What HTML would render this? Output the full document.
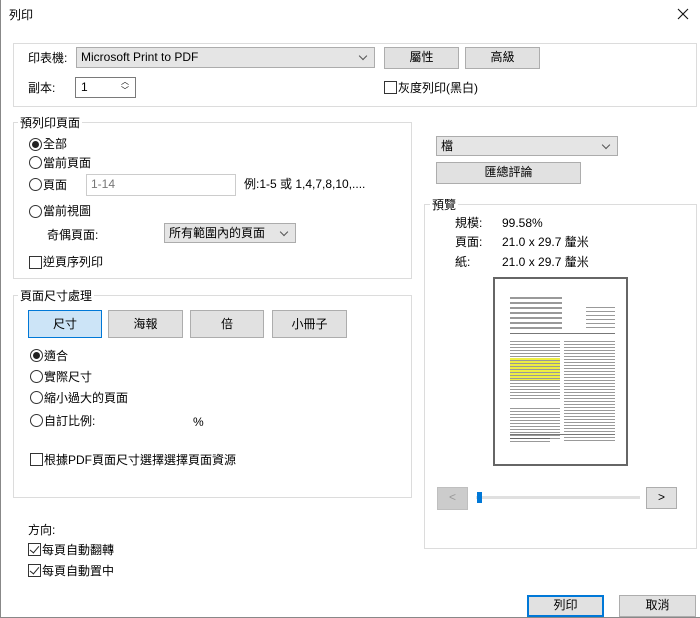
<!DOCTYPE html>
<html><head><meta charset="utf-8"><style>
*{box-sizing:border-box;margin:0;padding:0}
body{width:700px;height:618px;background:#fff;font-family:"Liberation Sans","Noto Sans CJK TC",sans-serif;font-size:12px;color:#000;position:relative;overflow:hidden}
.a{position:absolute;white-space:nowrap;line-height:14px}
.grp{position:absolute;border:1px solid #dcdcdc}
.leg{position:absolute;background:#fff;padding:0 2px;line-height:14px}
.btn{position:absolute;background:#e1e1e1;border:1px solid #adadad;text-align:center;line-height:19px}
.sel{position:absolute;background:#e5e5e5;border:1px solid #acacac;padding-left:4px;line-height:18px}
.sel:after{content:"";position:absolute;right:8px;top:5px;width:5px;height:5px;border-right:1px solid #555;border-bottom:1px solid #555;transform:rotate(45deg)}
.rad{position:absolute;width:13px;height:13px;border:1px solid #333;border-radius:50%;background:#fff}
.rad.on:after{content:"";position:absolute;left:2px;top:2px;width:7px;height:7px;border-radius:50%;background:#222}
.chk{position:absolute;width:13px;height:13px;border:1px solid #333;background:#fff}
.chk.on:after{content:"";position:absolute;left:3px;top:0px;width:4px;height:8px;border-right:1px solid #222;border-bottom:1px solid #222;transform:rotate(40deg)}
.line{position:absolute;height:1px;background:#333}
.tx{position:absolute;opacity:.5}
</style></head><body>
<div style="position:absolute;left:0;top:0;width:700px;height:618px;border:1px solid #888;border-top:none;border-right:none"></div>
<div class="a" style="left:9px;top:8px">列印</div>
<svg style="position:absolute;left:677px;top:8px" width="12" height="12"><path d="M1 1L11 11M11 1L1 11" stroke="#111" stroke-width="1.1"/></svg>

<div class="grp" style="left:13px;top:43px;width:684px;height:64px"></div>
<div class="a" style="left:28px;top:51px">印表機:</div>
<div class="sel" style="left:76px;top:47px;width:299px;height:21px">Microsoft Print to PDF</div>
<div class="btn" style="left:384px;top:47px;width:75px;height:22px">屬性</div>
<div class="btn" style="left:465px;top:47px;width:75px;height:22px">高級</div>
<div class="a" style="left:28px;top:81px">副本:</div>
<div style="position:absolute;left:75px;top:77px;width:61px;height:21px;border:1px solid #7a7a7a;background:#fff;padding-left:5px;line-height:18px">1</div>
<div class="a" style="left:121px;top:77px;font-size:8px;line-height:9px">︿<br>﹀</div>
<div class="chk" style="left:384px;top:81px"></div>
<div class="a" style="left:398px;top:81px">灰度列印(黑白)</div>

<div class="grp" style="left:13px;top:122px;width:399px;height:157px"></div>
<div class="leg" style="left:18px;top:116px">預列印頁面</div>
<div class="rad on" style="left:29px;top:138px"></div><div class="a" style="left:43px;top:137px">全部</div>
<div class="rad" style="left:29px;top:156px"></div><div class="a" style="left:43px;top:156px">當前頁面</div>
<div class="rad" style="left:29px;top:178px"></div><div class="a" style="left:43px;top:178px">頁面</div>
<div style="position:absolute;left:86px;top:174px;width:150px;height:22px;border:1px solid #ccc;color:#777;padding-left:4px;line-height:19px">1-14</div>
<div class="a" style="left:244px;top:177px">例:1-5 或 1,4,7,8,10,....</div>
<div class="rad" style="left:29px;top:205px"></div><div class="a" style="left:43px;top:204px">當前視圖</div>
<div class="a" style="left:47px;top:228px">奇偶頁面:</div>
<div class="sel" style="left:164px;top:223px;width:132px;height:20px">所有範圍內的頁面</div>
<div class="chk" style="left:29px;top:256px"></div><div class="a" style="left:43px;top:255px">逆頁序列印</div>

<div class="grp" style="left:13px;top:295px;width:399px;height:203px"></div>
<div class="leg" style="left:18px;top:289px">頁面尺寸處理</div>
<div class="btn" style="left:28px;top:310px;width:74px;height:28px;line-height:26px;background:#cce4f7;border-color:#0078d7">尺寸</div>
<div class="btn" style="left:108px;top:310px;width:75px;height:28px;line-height:26px">海報</div>
<div class="btn" style="left:190px;top:310px;width:74px;height:28px;line-height:26px">倍</div>
<div class="btn" style="left:272px;top:310px;width:75px;height:28px;line-height:26px">小冊子</div>
<div class="rad on" style="left:30px;top:349px"></div><div class="a" style="left:44px;top:349px">適合</div>
<div class="rad" style="left:30px;top:370px"></div><div class="a" style="left:44px;top:370px">實際尺寸</div>
<div class="rad" style="left:30px;top:391px"></div><div class="a" style="left:44px;top:391px">縮小過大的頁面</div>
<div class="rad" style="left:30px;top:414px"></div><div class="a" style="left:44px;top:414px">自訂比例:</div>
<div class="a" style="left:193px;top:415px">%</div>
<div class="chk" style="left:30px;top:453px"></div><div class="a" style="left:44px;top:453px">根據PDF頁面尺寸選擇選擇頁面資源</div>

<div class="a" style="left:28px;top:523px">方向:</div>
<div class="chk on" style="left:28px;top:543px"></div><div class="a" style="left:42px;top:543px">每頁自動翻轉</div>
<div class="chk on" style="left:28px;top:564px"></div><div class="a" style="left:42px;top:564px">每頁自動置中</div>

<div class="sel" style="left:436px;top:136px;width:182px;height:20px">檔</div>
<div class="btn" style="left:436px;top:162px;width:145px;height:22px">匯總評論</div>

<div class="grp" style="left:424px;top:204px;width:273px;height:345px"></div>
<div class="leg" style="left:430px;top:198px">預覽</div>
<div class="a" style="left:455px;top:216px">規模:</div><div class="a" style="left:502px;top:216px">99.58%</div>
<div class="a" style="left:455px;top:235px">頁面:</div><div class="a" style="left:502px;top:235px">21.0 x 29.7 釐米</div>
<div class="a" style="left:455px;top:255px">紙:</div><div class="a" style="left:502px;top:255px">21.0 x 29.7 釐米</div>

<div style="position:absolute;left:493px;top:277px;width:135px;height:189px;border:2px solid #666;background:#fff"></div>
<div class="tx" style="left:510px;top:297px;width:52px;height:32px;background:repeating-linear-gradient(#333 0 2px,#fff 2px 5px)"></div>
<div class="tx" style="left:586px;top:307px;width:29px;height:22px;background:repeating-linear-gradient(#333 0 1px,#fff 1px 4px)"></div>
<div class="line" style="left:510px;top:333px;width:105px;background:#777"></div>
<div class="tx" style="left:510px;top:341px;width:50px;height:58px;background:repeating-linear-gradient(#333 0 1px,#fff 1px 3px)"></div>
<div style="position:absolute;left:510px;top:358px;width:50px;height:22px;background:repeating-linear-gradient(#ee4 0 2px,#999 2px 3px)"></div>
<div class="tx" style="left:564px;top:341px;width:51px;height:100px;background:repeating-linear-gradient(#333 0 1px,#fff 1px 3px)"></div>
<div class="tx" style="left:510px;top:408px;width:50px;height:33px;background:repeating-linear-gradient(#333 0 1px,#fff 1px 3px)"></div>
<div class="line" style="left:510px;top:434px;width:105px;background:#777"></div>
<div class="tx" style="left:510px;top:438px;width:40px;height:6px;background:repeating-linear-gradient(#333 0 1px,#fff 1px 3px)"></div>

<div class="btn" style="left:437px;top:487px;width:31px;height:23px;background:#ccc;border-color:#bfbfbf;color:#999">&lt;</div>
<div style="position:absolute;left:476px;top:496px;width:164px;height:3px;background:#e0e0e0"></div>
<div style="position:absolute;left:477px;top:492px;width:5px;height:11px;background:#0078d7"></div>
<div class="btn" style="left:646px;top:487px;width:31px;height:22px">&gt;</div>

<div class="btn" style="left:527px;top:595px;width:77px;height:22px;border:2px solid #0078d7;line-height:17px">列印</div>
<div class="btn" style="left:619px;top:595px;width:77px;height:22px">取消</div>
</body></html>
